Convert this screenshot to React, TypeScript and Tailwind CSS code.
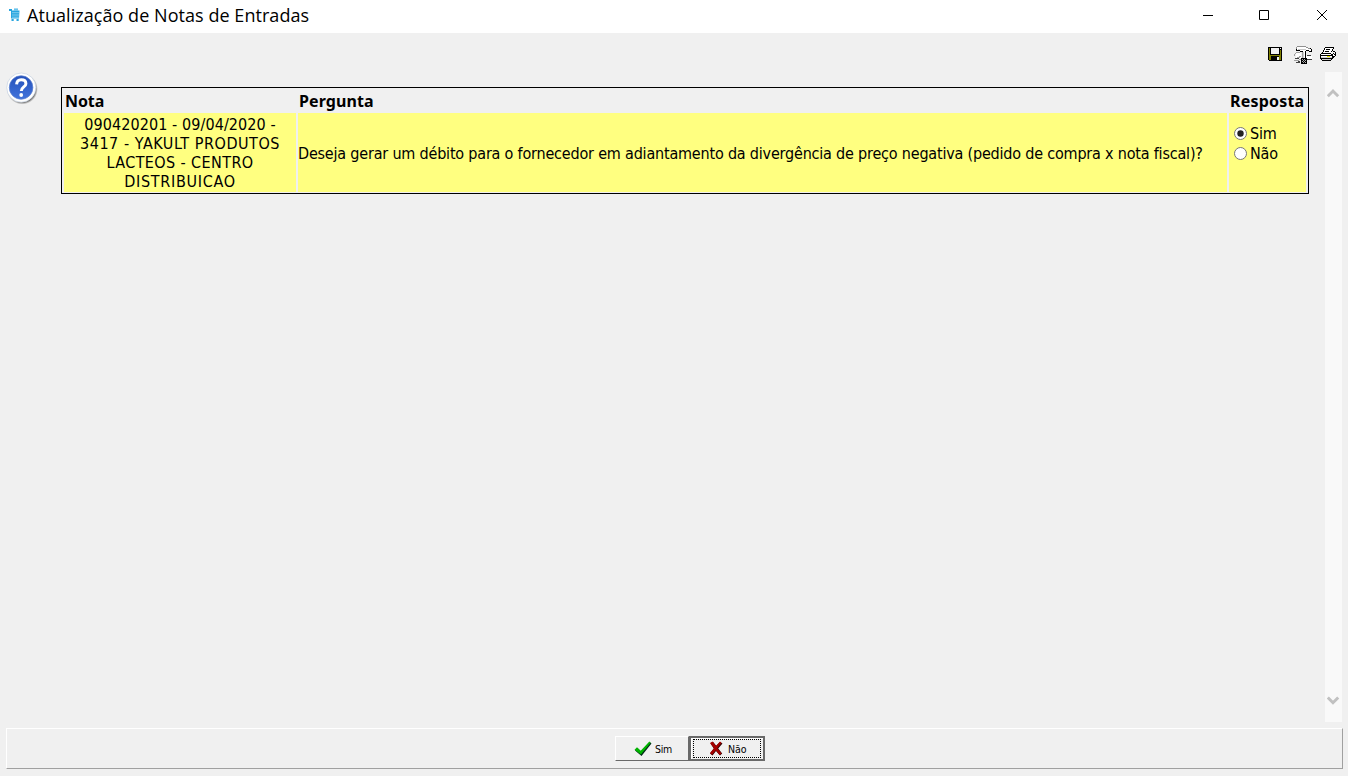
import React from "react";

function CartIcon() {
  return (
    <svg width="12" height="14" viewBox="0 0 12 14" fill="#27a5df">
      <path d="M0 1h3v1.5h7.5L10 10.5H2V3H0z" />
      <path d="M5 .4h4v2.4H5z" fill="#69c3ec" />
      <path d="M2.5 11h2.2v2H2.5zM7.5 11h2.2v2H7.5z" />
      <path d="M3 4.7h7M3 7h7M3 9.2h7" stroke="#a9def5" strokeWidth=".7" />
    </svg>
  );
}

function QuestionIcon() {
  return (
    <svg width="34" height="34" viewBox="0 0 34 34">
      <defs>
        <radialGradient id="halo" cx=".5" cy=".5" r=".5">
          <stop offset=".84" stopColor="#555" />
          <stop offset="1" stopColor="#999" stopOpacity="0" />
        </radialGradient>
        <linearGradient id="ball" x1="0" y1="0" x2="0" y2="1">
          <stop offset="0" stopColor="#2450ba" />
          <stop offset="1" stopColor="#4274dc" />
        </linearGradient>
      </defs>
      <circle cx="17.3" cy="17" r="15.6" fill="url(#halo)" />
      <circle cx="16.3" cy="15.6" r="14.6" fill="#fff" stroke="#ccd5e3" strokeWidth=".8" />
      <circle cx="16.1" cy="15.5" r="11.8" fill="url(#ball)" stroke="#5c7fce" strokeWidth=".7" />
      <path d="M11.6 12.4c.2-3.2 2-4.6 4.6-4.6 2.8 0 4.7 1.5 4.7 3.9 0 3.3-4.6 3.1-4.6 7.2" fill="none" stroke="#fff" strokeWidth="3" />
      <circle cx="16.2" cy="23" r="1.9" fill="#fff" />
    </svg>
  );
}

function SaveIcon() {
  return (
    <svg width="14" height="14" viewBox="0 0 14 14" shapeRendering="crispEdges">
      <path d="M0 0h14v14H1L0 13z" />
      <path d="M1 1h1v7h10V3h1v10h-2V9H3v4H1z" fill="#808000" />
      <path d="M3 1h8v6H3zM12 1h1v1h-1zM9 10h2v3H9z" fill="#f0f0f0" />
    </svg>
  );
}

function ToolsIcon() {
  return (
    <svg width="18" height="18" viewBox="0 0 18 18" shapeRendering="crispEdges">
      <path d="M3 1h10v1h2v1h2v2h-4v1h-2v6H8V6H6V4H3zM2 7h5v6H2zM12 10h6v3h-6z" fill="#fff" />
      <path d="M3 0h9v1H3zM2 1h1v2H2zM12 1h2v1h-2zM14 2h2v1h-2z" fill="#909090" />
      <path d="M4 3h8v1H4z" fill="#c8c8c8" />
      <path d="M2 3h1v2H2zM3 4h3v1H3zM6 5h3v1H6zM16 2h1v1h-1zM17 3h1v3h-1zM12 4h3v1h-3zM15 5h2v1h-2zM11 5h1v8h-1z" />
      <path d="M8 6h1v6H8zM2 6h4v1H2zM1 7h1v1H1zM0 8h1v2H0zM5 10h2v1H5zM3 11h3v1H3zM0 14h5v1H0zM5 13h2v1H5z" fill="#a0a0a0" />
      <path d="M9 6h1v6H9z" fill="#d0d0d0" />
      <path d="M1 12h4v1H1zM2 16h4v1H2zM4 15h2v1H4zM13 9h4v1h-4zM12 12h1v1h-1zM13 13h5v1h-5z" fill="#404040" />
      <path d="M7 12h6v6H7z" />
      <path d="M8 13h1v1H8zM10 13h1v1h-1zM9 14h1v1H9zM11 14h1v1h-1zM8 15h1v1H8zM10 15h1v1h-1zM9 16h1v1H9zM11 16h1v1h-1z" fill="#aaa" />
    </svg>
  );
}

function PrinterIcon() {
  return (
    <svg width="16" height="14" viewBox="0 0 16 14" shapeRendering="crispEdges">
      <path d="M5 1h8v2h-1v3h2v1h1v3h-1v1h-2v2H2v-1H1V7h1V6h1V4h1V2h1z" fill="#fff" />
      <path d="M5 0h9v1H5zM4 1h1v2H4zM3 3h1v2H3zM2 5h1v1H2zM13 1h1v1h-1zM12 2h1v2h-1zM11 4h1v1h-1zM6 2h4v1H6zM5 4h4v1H5zM13 4h2v1h-2zM1 6h10v1H1zM11 7h1v1h-1zM13 6h1v1h-1zM12 7h1v1h-1zM15 5h1v4h-1zM0 7h1v5H0zM1 8h11v1H1zM12 8h1v4h-1zM14 7h1v1h-1zM13 9h1v2h-1zM14 9h1v1h-1zM1 11h11v1H1zM1 12h1v1H1zM2 13h9v1H2zM11 12h1v1h-1z" />
      <path d="M7 9h3v1H7z" fill="#e8e800" />
      <path d="M2 12h9v1H2zM1 10h11v1H1z" fill="#d0d0d0" />
    </svg>
  );
}

function Chevron({ down = false }: { down?: boolean }) {
  return (
    <svg width="13" height="10" viewBox="0 0 13 10" fill="none" stroke="#c1c1c1" strokeWidth="3">
      <path d={down ? "M.8 1.5 6 6.7l5.2-5.2" : "M.8 8.2 6 3l5.2 5.2"} />
    </svg>
  );
}

function Radio({ label, checked = false }: { label: string; checked?: boolean }) {
  return (
    <div className="flex h-5 items-center gap-[3px]">
      <svg width="13" height="13" viewBox="0 0 13 13">
        <circle cx="6.5" cy="6.5" r="6" fill="#fff" stroke="#777" />
        {checked && <circle cx="6.5" cy="6.5" r="3.2" fill="#222" />}
      </svg>
      <span className="tracking-[-0.2px]">{label}</span>
    </div>
  );
}

export default function App() {
  return (
    <div className="flex h-[776px] w-[1348px] flex-col overflow-hidden bg-[#f0f0f0] text-black">
      <header className="flex h-[33px] shrink-0 items-start bg-white">
        <div className="ml-[9px] mt-[8px]"><CartIcon /></div>
        <h1 className="ml-[6px] mt-[2px] whitespace-nowrap font-['Open_Sans','Noto_Sans',sans-serif] text-[18px] leading-[26px] tracking-[0.05px]">
          Atualização de Notas de Entradas
        </h1>
        <svg className="ml-auto mr-[20px] mt-[9px]" width="125" height="12" viewBox="0 0 125 12" fill="none" stroke="#000">
          <path d="M0 6.5h10" />
          <path d="M56.5 1.5h9v9h-9z" />
          <path d="m114 1 10 10m0-10-10 10" />
        </svg>
      </header>

      <div className="flex h-[39px] shrink-0 items-start justify-end pr-[12px] pt-[13px]">
        <div className="mt-[1px]"><SaveIcon /></div>
        <div className="ml-[12px]"><ToolsIcon /></div>
        <div className="ml-[8px] mt-[1px]"><PrinterIcon /></div>
      </div>

      <main className="flex h-[650px] shrink-0 items-start font-['DejaVu_Sans_Condensed','DejaVu_Sans',sans-serif] text-[16px]">
        <div className="ml-[5px]"><QuestionIcon /></div>
        <div className="ml-[22px] mt-[15px] grid h-[107px] w-[1248px] grid-cols-[232px_929px_77px] grid-rows-[25px_79px] gap-x-[2px] border border-black pl-[2px] leading-[19px]">
          <div className="pl-[1px] pt-[4px] font-['Noto_Sans',sans-serif] font-bold tracking-[-0.1px]">Nota</div>
          <div className="pl-[1px] pt-[4px] font-['Noto_Sans',sans-serif] font-bold tracking-[0.1px]">Pergunta</div>
          <div className="pl-[1px] pt-[4px] font-['Noto_Sans',sans-serif] font-bold tracking-[0.2px]">Resposta</div>
          <div className="whitespace-nowrap bg-[#ffff80] pt-[2px] text-center">
            <div className="tracking-[0.08px]">090420201 - 09/04/2020 -</div>
            <div className="tracking-[0.55px]">3417 - YAKULT PRODUTOS</div>
            <div className="tracking-[0.4px]">LACTEOS - CENTRO</div>
            <div className="tracking-[0.7px]">DISTRIBUICAO</div>
          </div>
          <div className="flex items-center whitespace-nowrap bg-[#ffff80] pt-[1px]">
            <span className="tracking-[-0.194px]">Deseja gerar um débito para o fornecedor em adiantamento da divergência de preço negativa (pedido de compra x nota fiscal)?</span>
          </div>
          <div className="bg-[#ffff80] pl-[5px] pt-[10px]">
            <Radio label="Sim" checked />
            <Radio label="Não" />
          </div>
        </div>
        <div className="ml-[16px] flex h-[650px] w-[17px] flex-col items-center justify-between bg-[#f9f9f9] py-[16px]">
          <Chevron />
          <Chevron down />
        </div>
      </main>

      <footer className="ml-[6px] mt-[6px] flex h-[41px] w-[1337px] items-start border border-b-[#a0a0a0] border-l-white border-r-[#a0a0a0] border-t-white pl-[608px] pt-[7px] font-['DejaVu_Sans_Condensed',sans-serif] text-[10.5px]">
        <button className="flex h-[25px] w-[74px] items-center border border-b-[#696969] border-l-white border-r-[#696969] border-t-white pl-[18px]">
          <svg width="18" height="16" viewBox="0 0 18 16">
            <path d="M1 9.5 3.5 7 7 10.5 15.5 1 17.5 2.5 7.5 15z" fill="#002b18" />
            <path d="M.5 8.8 3 6.3l3.7 3.5L15.4.5l1.3 1.2-9.8 11.8z" fill="#00b400" />
          </svg>
          <span className="ml-[3px] pt-[2px] tracking-[-0.3px]">Sim</span>
        </button>
        <button className="flex h-[25px] w-[76px] items-center border-2 border-[#696969] p-[1px] shadow-[inset_1px_1px_0_white]">
          <span className="ml-[1px] flex h-[19px] w-[68px] items-center border border-dotted border-black pl-[15px]">
            <svg width="14" height="15" viewBox="0 0 14 15">
              <path d="M1.5 2.5 4 .8l3.2 4L11 1l2.5 1.5-4.3 5 4 5L11 14.5 7 10l-3.5 4.5L1 12.5l3.8-5z" fill="#350000" />
              <path d="M1 2 3.5.5 7 5 11 .6l1.5 1.2-4.3 5.4 4.3 5L10.5 14 6.8 9.2 3 13.8 1 12l4-4.8z" fill="#a60000" />
            </svg>
            <span className="ml-[5px] pt-[2px]">Não</span>
          </span>
        </button>
      </footer>
    </div>
  );
}
